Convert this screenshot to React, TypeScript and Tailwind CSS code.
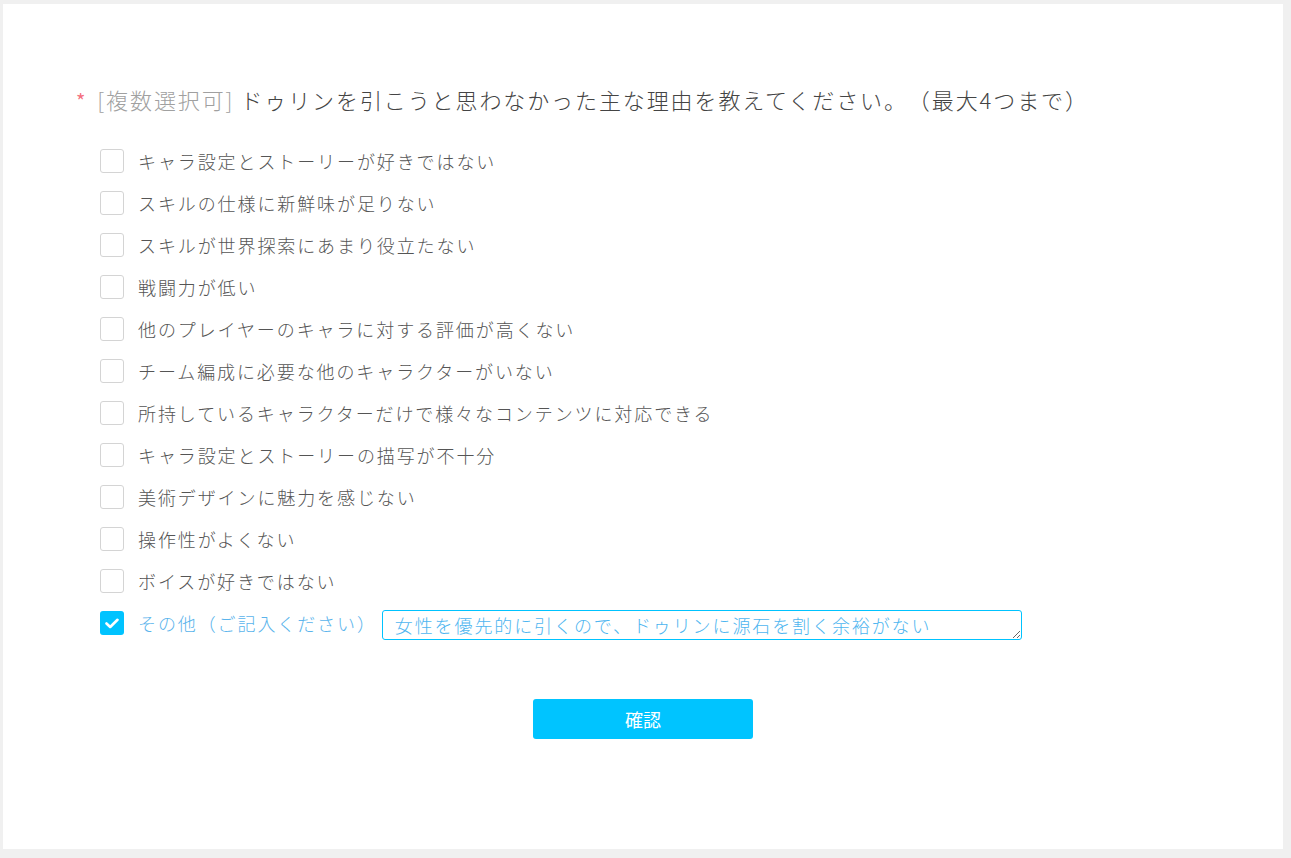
import { useState } from 'react';

const options = [
  'キャラ設定とストーリーが好きではない',
  'スキルの仕様に新鮮味が足りない',
  'スキルが世界探索にあまり役立たない',
  '戦闘力が低い',
  '他のプレイヤーのキャラに対する評価が高くない',
  'チーム編成に必要な他のキャラクターがいない',
  '所持しているキャラクターだけで様々なコンテンツに対応できる',
  'キャラ設定とストーリーの描写が不十分',
  '美術デザインに魅力を感じない',
  '操作性がよくない',
  'ボイスが好きではない',
];

function Check({ checked }: { checked: boolean }) {
  if (checked) {
    return (
      <span className="flex h-6 w-6 shrink-0 items-center justify-center rounded-[3px] bg-[#00c3ff]">
        <svg width="14" height="11" viewBox="0 0 14 11" fill="none">
          <path d="M1.5 5.5 5.2 9 12.5 1.8" stroke="white" strokeWidth="2.6" strokeLinecap="round" strokeLinejoin="round" />
        </svg>
      </span>
    );
  }
  return <span className="h-6 w-6 shrink-0 rounded-[3px] border border-[#d4d4d4] bg-white" />;
}

export default function App() {
  const [checked, setChecked] = useState<boolean[]>(options.map(() => false));
  const [other, setOther] = useState(true);
  const [text, setText] = useState('女性を優先的に引くので、ドゥリンに源石を割く余裕がない');

  return (
    <div
      className="min-h-[858px] bg-[#f0f0f0] pt-1 pl-[3px] pr-2 pb-[9px] font-light [text-spacing-trim:space-all]"
      style={{ fontFamily: '"Noto Sans CJK JP", "Noto Sans", sans-serif' }}
    >
      <div className="h-[845px] w-[1280px] bg-white pl-[73px] pt-[80px]">
        <h2 className="flex items-center text-[22px] leading-[30px] tracking-[1.9px] text-[#444]">
          <span className="mr-[10px] mt-[4px] font-normal text-[20px] leading-none text-[#f4707e]">*</span>
          <span className="text-[#a0a0a0]">[複数選択可]</span>
          <span className="ml-[6px]">ドゥリンを引こうと思わなかった主な理由を教えてください。（最大4つまで）</span>
        </h2>

        <div className="mt-[35px] flex flex-col gap-[18px] pl-[24px]">
          {options.map((o, i) => (
            <label
              key={o}
              className="flex h-6 cursor-pointer items-center gap-[14px]"
              onClick={() => setChecked(checked.map((c, j) => (j === i ? !c : c)))}
            >
              <Check checked={checked[i]} />
              <span className="text-[18px] tracking-[1.9px] text-[#555]">{o}</span>
            </label>
          ))}
          <div className="flex h-6 items-center">
            <label className="flex cursor-pointer items-center gap-[14px]" onClick={() => setOther(!other)}>
              <Check checked={other} />
              <span className="text-[18px] tracking-[1.9px] text-[#5ab4ec]">その他（ご記入ください）</span>
            </label>
            <textarea
              value={text}
              onChange={(e) => setText(e.target.value)}
              className="ml-[5px] mt-1 h-[30px] w-[640px] resize-y rounded-[3px] border border-[#00c3ff] px-3 py-0 text-[18px] leading-[28px] tracking-[1.9px] text-[#4fb6f0] outline-none"
            />
          </div>
        </div>

        <div className="mt-[64px] flex justify-center pr-[73px]">
          <button className="h-10 w-[220px] rounded-[3px] bg-[#00c4ff] text-[18px] font-normal text-white">確認</button>
        </div>
      </div>
    </div>
  );
}
